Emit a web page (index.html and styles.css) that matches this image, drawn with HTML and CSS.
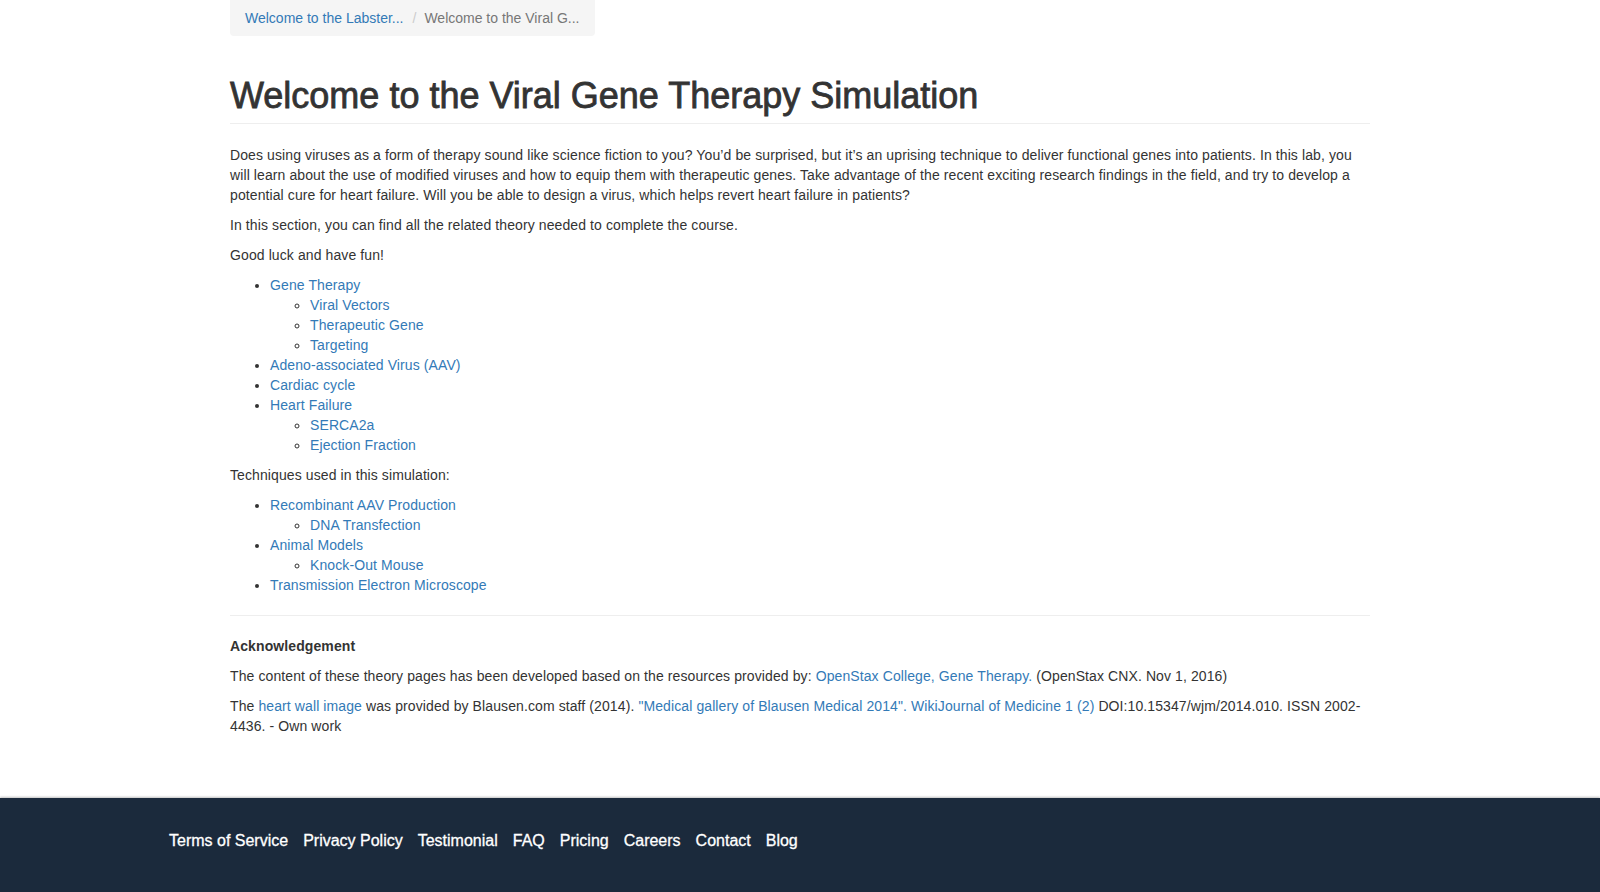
FILE: index.html
```html
<!DOCTYPE html>
<html lang="en">
<head>
<meta charset="utf-8">
<title>Welcome to the Viral Gene Therapy Simulation</title>
<link rel="stylesheet" href="styles.css">
</head>
<body>
<div class="page">
  <main class="container">
    <ol class="breadcrumb">
      <li><a href="#">Welcome to the Labster...</a></li>
      <li class="active">Welcome to the Viral G...</li>
    </ol>

    <div class="page-header">
      <h1>Welcome to the Viral Gene Therapy Simulation</h1>
    </div>

    <p>Does using viruses as a form of therapy sound like science fiction to you? You’d be surprised, but it’s an uprising technique to deliver functional genes into patients. In this lab, you will learn about the use of modified viruses and how to equip them with therapeutic genes. Take advantage of the recent exciting research findings in the field, and try to develop a potential cure for heart failure. Will you be able to design a virus, which helps revert heart failure in patients?</p>
    <p>In this section, you can find all the related theory needed to complete the course.</p>
    <p>Good luck and have fun!</p>

    <ul>
      <li><a href="#">Gene Therapy</a>
        <ul>
          <li><a href="#">Viral Vectors</a></li>
          <li><a href="#">Therapeutic Gene</a></li>
          <li><a href="#">Targeting</a></li>
        </ul>
      </li>
      <li><a href="#">Adeno-associated Virus (AAV)</a></li>
      <li><a href="#">Cardiac cycle</a></li>
      <li><a href="#">Heart Failure</a>
        <ul>
          <li><a href="#">SERCA2a</a></li>
          <li><a href="#">Ejection Fraction</a></li>
        </ul>
      </li>
    </ul>

    <p>Techniques used in this simulation:</p>

    <ul>
      <li><a href="#">Recombinant AAV Production</a>
        <ul>
          <li><a href="#">DNA Transfection</a></li>
        </ul>
      </li>
      <li><a href="#">Animal Models</a>
        <ul>
          <li><a href="#">Knock-Out Mouse</a></li>
        </ul>
      </li>
      <li><a href="#">Transmission Electron Microscope</a></li>
    </ul>

    <hr>

    <p><strong>Acknowledgement</strong></p>
    <p>The content of these theory pages has been developed based on the resources provided by: <a href="#">OpenStax College, Gene Therapy.</a> (OpenStax CNX. Nov 1, 2016)</p>
    <p>The <a href="#">heart wall image</a> was provided by Blausen.com staff (2014). <a href="#">"Medical gallery of Blausen Medical 2014". WikiJournal of Medicine 1 (2)</a> DOI:10.15347/wjm/2014.010. ISSN 2002-4436. - Own work</p>
  </main>

  <footer class="footer">
    <nav class="footer-links">
      <a href="#">Terms of Service</a>
      <a href="#">Privacy Policy</a>
      <a href="#">Testimonial</a>
      <a href="#">FAQ</a>
      <a href="#">Pricing</a>
      <a href="#">Careers</a>
      <a href="#">Contact</a>
      <a href="#">Blog</a>
    </nav>
  </footer>
</div>
</body>
</html>
```

FILE: styles.css
```css
* {
  box-sizing: border-box;
}

html, body {
  margin: 0;
  padding: 0;
}

body {
  font-family: "Liberation Sans", Arial, Helvetica, sans-serif;
  font-size: 14px;
  line-height: 20px;
  color: #333333;
  background: #ffffff;
}

a {
  color: #337ab7;
  text-decoration: none;
}

.container {
  width: 1170px;
  margin: 0 auto;
  padding: 0 15px 52px;
  letter-spacing: 0.1px;
}

.breadcrumb {
  display: inline-flex;
  list-style: none;
  margin: 0 0 20px;
  padding: 8px 15px;
  background: #f5f5f5;
  border-radius: 0 0 4px 4px;
  letter-spacing: 0;
}

.breadcrumb li + li::before {
  content: "/";
  color: #cccccc;
  padding: 0 8px 0 9px;
}

.breadcrumb .active {
  color: #777777;
}

.page-header {
  margin: 20px 0 21px;
  padding-bottom: 7px;
  border-bottom: 1px solid #eeeeee;
}

.page-header h1 {
  margin: 0;
  font-size: 36px;
  line-height: 1.1;
  font-weight: 400;
  letter-spacing: 0;
  -webkit-text-stroke: 0.8px #333333;
  color: #333333;
}

p {
  margin: 0 0 10px;
}

ul {
  margin: 0 0 10px;
  padding-left: 40px;
}

ul ul {
  margin: 0;
  list-style-type: circle;
}

hr {
  margin: 20px 0;
  border: 0;
  border-top: 1px solid #eeeeee;
}

.footer {
  background: #1b2a3c;
  box-shadow: 0 -1px 2px rgba(0, 0, 0, 0.25);
  height: 96px;
  display: flex;
  align-items: center;
  padding-left: 169px;
  padding-bottom: 10px;
}

.footer-links {
  display: flex;
  gap: 15px;
}

.footer-links a {
  color: #ffffff;
  font-size: 16px;
  letter-spacing: 0;
  -webkit-text-stroke: 0.3px #ffffff;
}
```
